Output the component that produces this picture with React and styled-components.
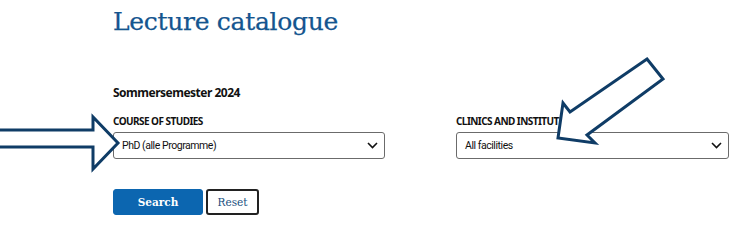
import React from 'react'
import styled, { createGlobalStyle } from 'styled-components'

const GlobalStyle = createGlobalStyle`
    html, body {
        margin: 0;
        padding: 0;
        background: #fff;
    }
    body {
        font-family: "Noto Sans", "Open Sans", sans-serif;
        color: #111;
    }
`;

const Chevron = () => (
    <svg width="11" height="7" viewBox="0 0 11 7">
        <path d="M1 1l4.5 4.5L10 1" fill="none" stroke="#111" strokeWidth="1.6" />
    </svg>
)

const App = () => {
    return (
        <Page>
            <GlobalStyle />
            <Title>Lecture catalogue</Title>
            <Semester>Sommersemester 2024</Semester>
            <Fields>
                <Field>
                    <Label>Course of studies</Label>
                    <Select>
                        <span>PhD (alle Programme)</span>
                        <Chevron />
                    </Select>
                </Field>
                <Field>
                    <Label>Clinics and institutes</Label>
                    <Select>
                        <span>All facilities</span>
                        <Chevron />
                    </Select>
                </Field>
            </Fields>
            <Buttons>
                <Button primary>Search</Button>
                <Button>Reset</Button>
            </Buttons>
            <Overlay width="740" height="219" viewBox="0 0 740 219">
                <polygon
                    points="-5,130 93,130 93,117 118,143 93,169 93,147 -5,147"
                    fill="#fff" stroke="#0f3c66" strokeWidth="3" strokeLinejoin="miter"
                />
                <polygon
                    points="647,59 663,79 587,135 595,143 558,138 563,103 570,112"
                    fill="#fff" stroke="#0f3c66" strokeWidth="3" strokeLinejoin="miter"
                />
            </Overlay>
        </Page>
    )
}

export default App

const Page = styled.div`
    position: relative;
    width: 740px;
    height: 219px;
    box-sizing: border-box;
    padding: 0 11px 0 113px;
    overflow: hidden;
`;
const Title = styled.h1`
    margin: 0;
    padding-top: 5px;
    font-family: "DejaVu Serif", "Liberation Serif", serif;
    font-weight: 400;
    font-size: 25px;
    letter-spacing: -0.3px;
    line-height: 34px;
    color: #14558f;
    -webkit-text-stroke: 0.25px #14558f;
`;
const Semester = styled.div`
    margin-top: 46px;
    font-size: 12px;
    font-weight: 700;
    letter-spacing: -0.5px;
    line-height: 16px;
`;
const Fields = styled.div`
    display: grid;
    grid-template-columns: 272px 273px;
    column-gap: 71px;
    margin-top: 13px;
`;
const Field = styled.div`
    display: flex;
    flex-direction: column;
`;
const Label = styled.div`
    font-size: 10px;
    font-weight: 700;
    letter-spacing: -0.55px;
    line-height: 14px;
    text-transform: uppercase;
    margin-bottom: 4px;
`;
const Select = styled.div`
    display: flex;
    align-items: center;
    justify-content: space-between;
    height: 27px;
    box-sizing: border-box;
    padding: 0 6px 0 8px;
    border: 1px solid #6b6b6b;
    border-radius: 3px;
    font-family: "Roboto", sans-serif;
    font-size: 10.5px;
    letter-spacing: -0.45px;
    color: #111;
`;
const Buttons = styled.div`
    display: flex;
    gap: 3px;
    margin-top: 30px;
`;
const Button = styled.button`
    height: 26px;
    box-sizing: border-box;
    padding: 0;
    width: ${props => props.primary ? '90px' : '53px'};
    border-radius: 3px;
    border: ${props => props.primary ? '1px solid #0c66b0' : '2px solid #222'};
    background: ${props => props.primary ? '#0c66b0' : '#fff'};
    color: ${props => props.primary ? '#fff' : '#1a4f80'};
    font-family: "DejaVu Serif", "Liberation Serif", serif;
    font-size: 10.5px;
    font-weight: ${props => props.primary ? 700 : 400};
`;
const Overlay = styled.svg`
    position: absolute;
    left: 0;
    top: 0;
    pointer-events: none;
`;
